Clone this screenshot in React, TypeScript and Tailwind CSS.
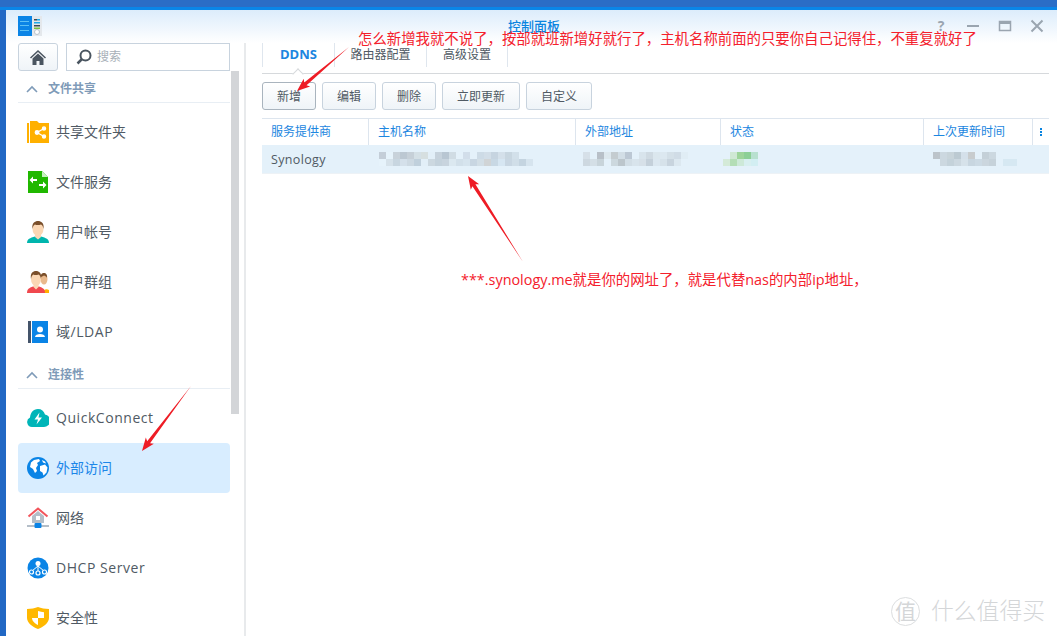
import { ReactNode } from "react";

const FONT = "font-['Open_Sans','Noto_Sans_CJK_SC',sans-serif]";

const FolderIcon = () => (
  <svg width="22" height="22" viewBox="0 0 22 22">
    <path d="M3 0h7l2 2h10v20H3z" fill="#ffb000" />
    <rect x="0" y="2" width="2" height="20" fill="#ffb000" />
    <g fill="#fff" stroke="#fff" strokeWidth="1.2">
      <circle cx="17" cy="7.5" r="1.6" />
      <circle cx="17" cy="15.5" r="1.6" />
      <circle cx="10" cy="11.5" r="1.8" />
      <path d="M17 7.5l-7 4 7 4" fill="none" />
    </g>
  </svg>
);

const FileIcon = () => (
  <svg width="22" height="22" viewBox="0 0 22 22">
    <path d="M1 0h14l6 6v16H1z" fill="#20b800" />
    <path d="M15 0l6 6h-6z" fill="#c6efc0" />
    <path d="M10 8H6V5.500L2.500 9 6 12.500V10h4zM12 13h4v-2.500l3.500 3.500-3.500 3.500V15h-4z" fill="#fff" />
  </svg>
);

const UserIcon = () => (
  <svg width="22" height="22" viewBox="0 0 22 22">
    <path d="M0 22c0-4 3-5 8-6.500h6c5 1.500 8 2.500 8 6.500z" fill="#00b5ad" />
    <path d="M8 13h6v3l-3 2.500-3-2.500z" fill="#fbd7b4" />
    <ellipse cx="11" cy="8" rx="5.500" ry="7" fill="#fbd7b4" />
    <path d="M5.500 8C4.500 2 8 0 11 0s6.500 2 5.500 8c-.5-3-1.500-4-2.500-4.500-2 .7-5 .7-6 0C7 4 6 5 5.500 8z" fill="#7a4f2a" />
  </svg>
);

const GroupIcon = () => (
  <svg width="22" height="22" viewBox="0 0 22 22">
    <ellipse cx="17" cy="8" rx="3.500" ry="5.500" fill="#e9b98c" />
    <path d="M13.500 7c0-4 1.500-5 3.500-5s3.500 1.500 3 5c-.5-1.500-1.500-2-3-2.500-1 .5-3 1-3.500 2.500z" fill="#7a4f2a" />
    <path d="M16 22c0-3 3-5 6-3v3z" fill="#ffb000" />
    <path d="M0 22c0-4 2-5 6-6.500h6c4 1.500 6 2.500 6 6.500z" fill="#f0484e" />
    <path d="M6.500 13h5v3l-2.500 2.500L6.500 16z" fill="#fbd7b4" />
    <ellipse cx="9" cy="8" rx="5" ry="7" fill="#fbd7b4" />
    <path d="M4 8C3 2 6 0 9 0s6 2 5 8c-.5-3-1.500-4-2.500-4.500-2 .7-4 .7-5 0C5.500 4 4.500 5 4 8z" fill="#7a4f2a" />
  </svg>
);

const LdapIcon = () => (
  <svg width="22" height="22" viewBox="0 0 22 22">
    <rect x="1" y="0" width="3" height="22" fill="#44546a" />
    <rect x="5" y="0" width="16" height="22" fill="#0a84e6" />
    <circle cx="13" cy="8.500" r="3" fill="#fff" />
    <path d="M8 16c0-2 2.500-3 5-3s5 1 5 3z" fill="#fff" />
  </svg>
);

const CloudIcon = () => (
  <svg width="22" height="22" viewBox="0 0 22 22">
    <path d="M5 20a5 5 0 0 1-2-9.500C3.500 6 6 2 11 2c3.500 0 6 2 7 5.500A6.300 6.300 0 0 1 17 20z" fill="#00b5b8" />
    <path d="M12.500 5.500L7.500 12.500h3.500L9.500 17.500l5.500-7h-3.500z" fill="#fff" />
  </svg>
);

const GlobeIcon = () => (
  <svg width="22" height="22" viewBox="0 0 22 22">
    <circle cx="11" cy="11" r="11" fill="#0a84e6" />
    <path d="M4 5.500l3-2.500 5-1 1 2-3 2 1 2-2 3 1 3-2 2-2-4-3-2z" fill="#fff" />
    <path d="M13 9l5-1.500 2.500 3-1 5-3 3-1-3-2.500-1.500zM15 3l3 1.500 1 2-3-1z" fill="#fff" />
  </svg>
);

const HouseIcon = () => (
  <svg width="22" height="22" viewBox="0 0 22 22">
    <path d="M5 9l6-5 6 5v7H5z" fill="#b4bec8" />
    <path d="M1.500 9.500L11 1.500l9.500 8" fill="none" stroke="#f2545b" strokeWidth="2" />
    <rect x="9" y="9" width="4" height="4" fill="#fff" />
    <rect x="0" y="18" width="22" height="2" fill="#b4bec8" />
    <rect x="7.500" y="16" width="7" height="5" rx="1" fill="#0a84e6" />
  </svg>
);

const DhcpIcon = () => (
  <svg width="22" height="22" viewBox="0 0 22 22">
    <circle cx="11" cy="11" r="10.500" fill="#0a84e6" />
    <circle cx="11" cy="6.500" r="2.500" fill="#fff" />
    <path d="M11 9v5M11 9l-6 5M11 9l6 5" stroke="#fff" fill="none" />
    <g fill="#0a84e6" stroke="#fff" strokeWidth="1.200">
      <circle cx="4.500" cy="15" r="2" />
      <circle cx="11" cy="16" r="2" />
      <circle cx="17.500" cy="15" r="2" />
    </g>
  </svg>
);

const ShieldIcon = () => (
  <svg width="22" height="22" viewBox="0 0 22 22">
    <path d="M0 2c4 0 8-1 11-2 3 1 7 2 11 2v9c0 5-6 9-11 11C6 20 0 16 0 11z" fill="#ffb800" />
    <path d="M11 4c2 .7 4 1 6 1.300V11h-6zM5 11h6v7c-3-1.500-6-4-6-7z" fill="#fff" />
  </svg>
);

const Mosaic = ({ rows }: { rows: string[][] }) => (
  <div className="flex flex-col">
    {rows.map((row, i) => (
      <div key={i} className="flex">
        {row.map((c, j) => (
          <div key={j} className="w-[7px] h-[7px]" style={{ backgroundColor: c }} />
        ))}
      </div>
    ))}
  </div>
);

const hostRows = [
  ["#c4ced8", "#e6f3fb", "#c8d2da", "#bcc8d2", "#c6d0d8", "#d4e0e6", "#d6dfe0", "#e2eff8", "#c6d2dc", "#b8c6d2", "#d0dce4", "#e4f1fa", "#d2deea", "#e4f1fa", "#cddbe6", "#d2dee8", "#c6d4e0", "#d4e0ea", "#c8d6e0", "#d2e0ea", "#e4f1fa", "#e4f1fa"],
  ["#e6f3fb", "#d6e2ea", "#c8d6e0", "#d4e0ea", "#cdd9e2", "#c0d0dc", "#e2eff8", "#ccd8e0", "#c4d2dc", "#c8d4de", "#dbe8f0", "#d2e0ea", "#d6e4ee", "#c8d6e2", "#d2dee6", "#d0d4d6", "#c8d8e4", "#d6e6f2", "#c8d6e2", "#d0dee8", "#c4d4e0", "#d6e4ee"],
];
const addrRows = [
  ["#d6e0e8", "#e4f1fa", "#b8c0c8", "#dde8ee", "#c4ccd0", "#d2dee6", "#bcc8d4", "#e4f1fa", "#d8e4ec", "#cfdae2", "#dbe7ee", "#dce8f0", "#d4e0e8", "#d0dce6", "#e0edf5"],
  ["#cdd8e0", "#d4dfe6", "#c8d4da", "#e4f1fa", "#ccd8de", "#bcc6cc", "#d2dee6", "#d8e4ec", "#d6e0e8", "#c4d0da", "#dbe7f0", "#d6e2ea", "#c8d4de", "#dce8f0", "#e4f1fa"],
];
const statusRows = [
  ["#e4f1fa", "#cfe8d4", "#9dd49a", "#8ccf96", "#b8e0d0"],
  ["#d4ead8", "#b4deb6", "#cde9d8", "#d8eff0", "#d2eef2"],
];
const timeRows = [
  ["#bcc4ca", "#ccd8e0", "#c8d4da", "#bccad2", "#d4e0ea", "#c8ccce", "#e4f1fa", "#c4d0d8", "#ccd8e0", "#e4f1fa", "#e4f1fa", "#e4f1fa"],
  ["#e4f1fa", "#ccd8e0", "#c4d2da", "#ccd8e0", "#d6e2ea", "#c8d6e0", "#ccdae4", "#cbd6de", "#c6d2da", "#e4f1fa", "#d6e8f2", "#d6e8f2"],
];

const SectionHead = ({ label }: { label: string }) => (
  <div className="flex items-center h-[29px] pt-[2px] border-b border-[#e8eef4] pl-[8px] gap-[10px] text-[12px] font-semibold text-[#7f9bb8]">
    <svg width="12" height="8" viewBox="0 0 12 8">
      <path d="M1 7l5-5 5 5" fill="none" stroke="#7f9bb8" strokeWidth="1.600" />
    </svg>
    <span>{label}</span>
  </div>
);

const NavItem = ({ icon, label, active, latin }: { icon: ReactNode; label: string; active?: boolean; latin?: boolean }) => (
  <div
    className={`flex items-center h-[50px] pl-[9px] gap-[7px] rounded-[4px] text-[14px] ${
      active ? "bg-[#d8edff] text-[#1c86e8]" : "text-[#505a64]"
    }`}
  >
    <div className="w-[22px] h-[22px] shrink-0">{icon}</div>
    <span className={`mb-[2px] ${latin ? "tracking-[0.55px]" : ""}`}>{label}</span>
  </div>
);

const Btn = ({ label, w, pressed }: { label: string; w: string; pressed?: boolean }) => (
  <div
    className={`${w} h-[28px] pt-[2px] flex items-center justify-center rounded-[3px] border text-[12px] text-[#505a64] bg-gradient-to-b from-[#ffffff] to-[#eff4f8] ${
      pressed ? "border-[#a9b4be]" : "border-[#c8d3de]"
    }`}
  >
    {label}
  </div>
);

const Th = ({ label, w }: { label: string; w: string }) => (
  <div className={`${w} flex items-center pl-[9px] border-r border-[#dde5ee] text-[12px] text-[#1c86e0]`}>{label}</div>
);

// tapered hand drawn arrow
const Arrow = ({ x1, y1, x2, y2 }: { x1: number; y1: number; x2: number; y2: number }) => {
  const len = Math.hypot(x2 - x1, y2 - y1);
  const ux = (x2 - x1) / len;
  const uy = (y2 - y1) / len;
  const nx = -uy;
  const ny = ux;
  const at = (back: number, side: number) =>
    `${x2 - ux * back + nx * side},${y2 - uy * back + ny * side}`;
  const points = [`${x1},${y1}`, at(11, 1.800), at(13, 5), at(0, 0), at(13, -5), at(11, -1.800)].join(" ");
  return <polygon points={points} fill="#ee1c25" />;
};

export default function App() {
  return (
    <div className={`${FONT} relative w-[1057px] h-[636px] overflow-hidden bg-white flex flex-col`}>
      <div className="h-[7px] shrink-0 bg-[#2b6dc6]" />
      <div className="h-[3px] shrink-0 bg-[#0a86e8]" />
      <div className="flex flex-1 min-h-0">
        <div className="w-[6px] shrink-0 bg-[#2268c4]" />
        <div className="flex-1 min-w-0 flex flex-col">
          {/* title bar */}
          <div className="h-[33px] shrink-0 relative flex items-center bg-gradient-to-b from-[#dcecfb] to-[#ffffff]">
            <svg className="ml-[12px]" width="24" height="21" viewBox="0 0 24 21">
              <rect x="0" y="0" width="14" height="20" fill="#0a84e6" />
              <rect x="14" y="0" width="10" height="20" fill="#e4e8ec" />
              <g fill="#5cc0f5">
                <rect x="2" y="5" width="9" height="1" />
                <rect x="2" y="9" width="9" height="1" />
                <rect x="2" y="14" width="9" height="1" />
              </g>
              <rect x="16" y="3" width="3" height="1.500" fill="#3f4a54" />
              <rect x="19" y="3" width="3" height="1.500" fill="#1ea8e8" />
              <rect x="16" y="6" width="6" height="1.500" fill="#1ea8e8" />
              <rect x="16" y="9" width="6" height="1.500" fill="#3f4a54" />
              <rect x="16" y="11.500" width="6" height="1.500" fill="#7cc040" />
              <circle cx="19" cy="16" r="2.500" fill="#fff" stroke="#b8c2cc" />
            </svg>
            <span className="absolute left-[502px] top-[10px] h-[12px] text-[13px] font-medium leading-[12px] text-[#0a84e0]">控制面板</span>
            <div className="ml-auto flex items-center gap-[12px] pr-[10px] mb-[1px]">
              <span className="w-[20px] h-[12px] text-center text-[14px] font-bold leading-[12px] text-[#9aa5b0]">?</span>
              <svg width="20" height="14" viewBox="0 0 20 14">
                <rect x="4" y="6" width="12" height="2" fill="#9aa5b0" />
              </svg>
              <svg width="20" height="14" viewBox="0 0 20 14">
                <path d="M4.500 2.500h11v9h-11z" fill="none" stroke="#9aa5b0" strokeWidth="1.500" />
                <rect x="4" y="2" width="12" height="3" fill="#9aa5b0" />
              </svg>
              <svg width="20" height="14" viewBox="0 0 20 14">
                <path d="M4.500 1.500l11 11M15.500 1.500l-11 11" stroke="#9aa5b0" strokeWidth="2" />
              </svg>
            </div>
          </div>

          <div className="flex flex-1 min-h-0">
            {/* sidebar */}
            <div className="w-[240px] shrink-0 border-r-[2px] border-[#e8eaec] flex">
              <div className="w-[224px] pl-[12px] shrink-0 overflow-hidden">
                <div className="flex gap-[8px] h-[28px]">
                  <div className="w-[40px] flex items-center justify-center rounded-[3px] border border-[#c8d3de] bg-gradient-to-b from-[#ffffff] to-[#eff4f8]">
                    <svg width="16" height="15" viewBox="0 0 16 15">
                      <path d="M8 0L0 7.500l1 1L8 2l7 6.500 1-1z" fill="#4a5560" />
                      <path d="M2.500 8.500L8 3.500l5.500 5V15h-4v-4h-3v4h-4z" fill="#4a5560" />
                    </svg>
                  </div>
                  <div className="flex-1 flex items-center gap-[5px] pl-[9px] border border-[#c8d3de] bg-white text-[12px] text-[#a8b0b8]">
                    <svg width="16" height="16" viewBox="0 0 16 16">
                      <circle cx="9.500" cy="6.500" r="5" fill="none" stroke="#4a5560" strokeWidth="2" />
                      <path d="M6 10l-4.500 4.500" stroke="#4a5560" strokeWidth="2.500" />
                    </svg>
                    <span>搜索</span>
                  </div>
                </div>
                <div className="h-[3px]" />
                <SectionHead label="文件共享" />
                <div className="h-[4px]" />
                <NavItem icon={<FolderIcon />} label="共享文件夹" />
                <NavItem icon={<FileIcon />} label="文件服务" />
                <NavItem icon={<UserIcon />} label="用户帐号" />
                <NavItem icon={<GroupIcon />} label="用户群组" />
                <NavItem icon={<LdapIcon />} label="域/LDAP" latin />
                <div className="h-[3px]" />
                <SectionHead label="连接性" />
                <div className="h-[4px]" />
                <NavItem icon={<CloudIcon />} label="QuickConnect" latin />
                <NavItem icon={<GlobeIcon />} label="外部访问" active />
                <NavItem icon={<HouseIcon />} label="网络" />
                <NavItem icon={<DhcpIcon />} label="DHCP Server" latin />
                <NavItem icon={<ShieldIcon />} label="安全性" />
              </div>
              <div className="pt-[28px] ml-[1px]">
                <div className="w-[8px] h-[343px] bg-[#d3d5d8]" />
              </div>
            </div>

            {/* content */}
            <div className="flex-1 min-w-0 pl-[16px] pr-[8px]">
              <div className="flex h-[31px] border-b-[1px] border-[#d6d9dc] text-[12px]">
                <div className="relative w-[73px] h-[24px] flex items-center justify-center border-x border-[#dfe6ee] text-[13px] font-bold text-[#1c86e0]">
                  DDNS
                  <div className="absolute left-[31px] top-[27px] w-[8px] h-[8px] rotate-45 bg-white border-l border-t border-[#d6d9dc]" />
                </div>
                <div className="w-[92px] h-[24px] flex items-center justify-center border-r border-[#dfe6ee] text-[#505a64]">路由器配置</div>
                <div className="w-[81px] h-[24px] flex items-center justify-center border-r border-[#dfe6ee] text-[#505a64]">高级设置</div>
              </div>
              <div className="flex gap-[6px] mt-[8px]">
                <Btn label="新增" w="w-[54px]" pressed />
                <Btn label="编辑" w="w-[54px]" />
                <Btn label="删除" w="w-[54px]" />
                <Btn label="立即更新" w="w-[78px]" />
                <Btn label="自定义" w="w-[66px]" />
              </div>
              <div className="mt-[8px] border-t border-[#dde5ee]">
                <div className="flex h-[26px]">
                  <Th label="服务提供商" w="w-[107px]" />
                  <Th label="主机名称" w="w-[207px]" />
                  <Th label="外部地址" w="w-[145px]" />
                  <Th label="状态" w="w-[203px]" />
                  <Th label="上次更新时间" w="w-[109px]" />
                  <div className="flex-1 flex flex-col items-center justify-center gap-[1px]">
                    <div className="w-[2px] h-[2px] bg-[#0a84e0]" />
                    <div className="w-[2px] h-[2px] bg-[#0a84e0]" />
                    <div className="w-[2px] h-[2px] bg-[#0a84e0]" />
                  </div>
                </div>
                <div className="flex h-[29px] items-center bg-[#e4f1fa] border-b border-[#edf2f6] text-[12.500px] text-[#505a64]">
                  <div className="w-[107px] pl-[9px] pt-[2px] tracking-[0.35px]">Synology</div>
                  <div className="w-[207px] pl-[10px]"><Mosaic rows={hostRows} /></div>
                  <div className="w-[145px] pl-[7px]"><Mosaic rows={addrRows} /></div>
                  <div className="w-[203px] pl-[2px]"><Mosaic rows={statusRows} /></div>
                  <div className="w-[109px] pl-[9px]"><Mosaic rows={timeRows} /></div>
                </div>
              </div>
            </div>
          </div>
        </div>
      </div>

      {/* red annotations pasted over the screenshot */}
      <svg className="absolute inset-0" width="1057" height="636" viewBox="0 0 1057 636">
        <Arrow x1={349} y1={47} x2={297} y2={91} />
        <Arrow x1={523} y1={262} x2={468} y2={176} />
        <Arrow x1={191} y1={386} x2={142} y2={451} />
      </svg>
      <span className="absolute left-[358px] top-[32px] text-[14.400px] leading-none whitespace-nowrap text-[#f4202c]">
        怎么新增我就不说了，按部就班新增好就行了，主机名称前面的只要你自己记得住，不重复就好了
      </span>
      <span className="absolute left-[461px] top-[273px] text-[14.400px] leading-none whitespace-nowrap text-[#f4202c]">
        ***.synology.me就是你的网址了，就是代替nas的内部ip地址，
      </span>

      {/* watermark */}
      <div className="absolute left-[891px] top-[597px] flex items-center gap-[11px] text-[#d4d6d8]">
        <div className="w-[29px] h-[29px] rounded-full border border-[#dcdedf] flex items-center justify-center text-[21px] leading-none">值</div>
        <span className="text-[22.800px] font-light leading-none whitespace-nowrap">什么值得买</span>
      </div>
    </div>
  );
}
